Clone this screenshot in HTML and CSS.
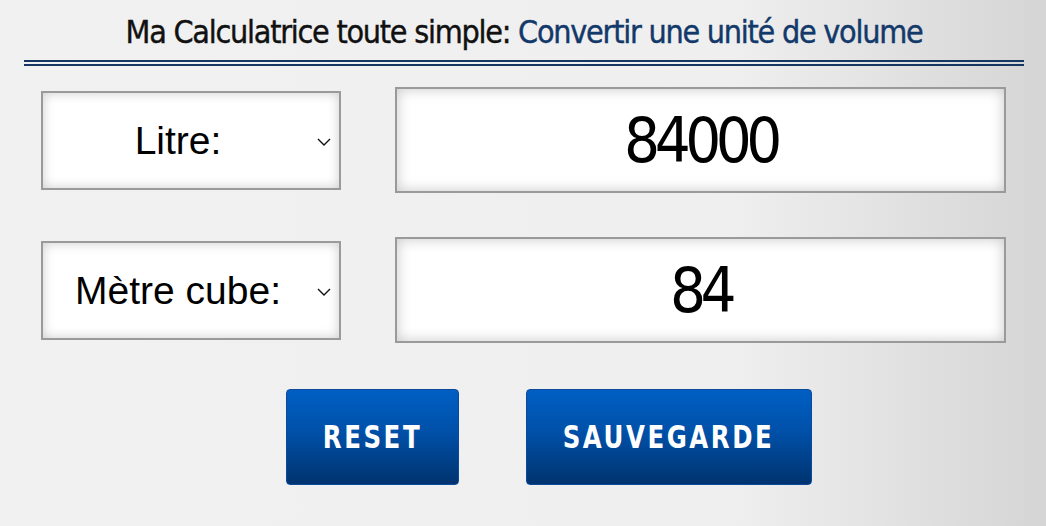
FILE: index.html
```html
<!DOCTYPE html>
<html lang="fr">
<head>
<meta charset="utf-8">
<title>Ma Calculatrice toute simple</title>
<link rel="stylesheet" href="styles.css">
</head>
<body>
<main class="calc">
  <h1 class="title"><span class="title-main">Ma Calculatrice toute simple:</span> <span class="title-sub">Convertir une unité de volume</span></h1>
  <div class="row">
    <div class="select-wrap">
      <select class="unit"><option>Litre:</option></select>
      <svg class="chev" width="14" height="8" viewBox="0 0 14 8"><path d="M1 1l6 6 6-6" fill="none" stroke="#111" stroke-width="1.4"/></svg>
    </div>
    <input class="value" type="text" value="84000">
  </div>
  <div class="row">
    <div class="select-wrap">
      <select class="unit"><option>Mètre cube:</option></select>
      <svg class="chev" width="14" height="8" viewBox="0 0 14 8"><path d="M1 1l6 6 6-6" fill="none" stroke="#111" stroke-width="1.4"/></svg>
    </div>
    <input class="value" type="text" value="84">
  </div>
  <div class="actions">
    <button class="btn btn-reset"><span class="btn-label">RESET</span></button>
    <button class="btn btn-save"><span class="btn-label">SAUVEGARDE</span></button>
  </div>
</main>
</body>
</html>
```
FILE: styles.css
```css
html, body {
  margin: 0;
  height: 100%;
}
body {
  background: linear-gradient(90deg, #f1f1f1 0%, #efefef 70%, #dcdcdc 92%, #d5d5d5 100%);
  font-family: "Liberation Sans", Arial, sans-serif;
}
.calc {
  display: flex;
  flex-direction: column;
  padding: 14px 0 0 0;
}
.title {
  margin: 0 22px 0 24px;
  padding-bottom: 10px;
  border-bottom: 6px double #143763;
  text-align: center;
  font-family: "DejaVu Sans Condensed", "DejaVu Sans", sans-serif;
  font-weight: normal;
  font-size: 32px;
  line-height: 36px;
  letter-spacing: -1.25px;
  -webkit-text-stroke: 0.4px currentColor;
}
.title-main { color: #111; }
.title-sub { color: #12396a; }
.row {
  display: flex;
  align-items: center;
  gap: 54px;
  padding-left: 41px;
  height: 106px;
}
.calc .row:first-of-type { margin-top: 21px; }
.row + .row { margin-top: 44px; }
.select-wrap {
  position: relative;
  width: 300px;
  height: 99px;
}
.unit {
  appearance: none;
  -webkit-appearance: none;
  width: 100%;
  height: 100%;
  box-sizing: border-box;
  border: 2px solid #9a9a9a;
  background: #fff;
  box-shadow: inset 0 0 12px rgba(0,0,0,0.2);
  font-family: "Liberation Sans", Arial, sans-serif;
  font-size: 39px;
  color: #000;
  text-align: center;
  text-align-last: center;
  padding: 0 26px 0 0;
  margin: 0;
  border-radius: 0;
}
.chev {
  position: absolute;
  right: 10px;
  top: 47px;
  pointer-events: none;
}
.value {
  width: 611px;
  height: 106px;
  box-sizing: border-box;
  border: 2px solid #9a9a9a;
  background: #fff;
  box-shadow: inset 0 0 14px rgba(0,0,0,0.22);
  font-family: "DejaVu Sans Condensed", "DejaVu Sans", sans-serif;
  font-size: 63px;
  letter-spacing: -5.5px;
  text-align: center;
  color: #000;
  padding: 0;
  margin: 0;
  border-radius: 0;
}
.actions {
  display: flex;
  gap: 67px;
  padding-left: 286px;
  margin-top: 46px;
}
.btn {
  height: 96px;
  border: 1px solid #0b4a9a;
  border-radius: 4px;
  background: linear-gradient(180deg, #005fc4 0%, #0050a8 45%, #00336f 100%);
  color: #fff;
  font-family: "DejaVu Sans Condensed", "DejaVu Sans", sans-serif;
  font-weight: bold;
  font-size: 32px;
  padding: 0;
}
.btn-label {
  display: inline-block;
  letter-spacing: 3px;
  transform: scaleX(0.85);
}
.btn-reset { width: 173px; }
.btn-save { width: 286px; }
```
